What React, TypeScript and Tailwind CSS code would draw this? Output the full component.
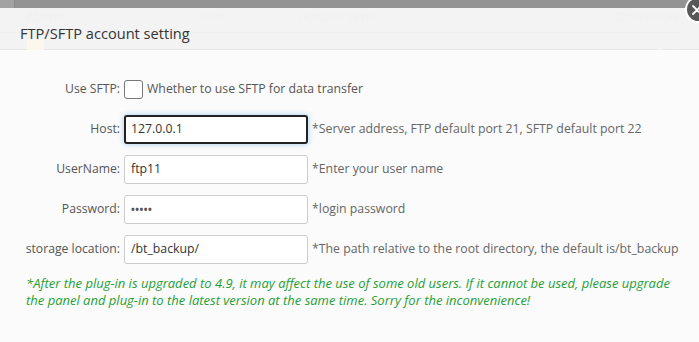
import React from "react";

const font = { fontFamily: '"Open Sans", "Noto Sans", Arial, sans-serif' };

function Row({ label, children, hint }: { label: string; children: React.ReactNode; hint?: string }) {
  return (
    <div className="flex items-center h-[29px]">
      <div className="w-[120px] text-right text-[12.2px] text-[#555] shrink-0 whitespace-nowrap">{label}</div>
      <div className="ml-[4px] flex items-center">{children}</div>
      {hint && <div className="ml-[4px] text-[12.3px] text-[#666] whitespace-nowrap">{hint}</div>}
    </div>
  );
}

function Field({ value, focus, password }: { value: string; focus?: boolean; password?: boolean }) {
  return (
    <div
      className={
        "w-[184px] h-[29px] rounded-[3px] bg-white flex items-center text-[12.3px] text-[#333] " +
        (focus
          ? "border-2 border-[#222] shadow-[0_0_5px_1px_rgba(102,175,233,0.45)] px-[5px]"
          : "border border-[#ccc] px-[6px]")
      }
    >
      {password ? <span className="text-[10px] font-bold text-[#555] tracking-[0.5px]">•••••</span> : value}
    </div>
  );
}

export default function App() {
  return (
    <div className="relative w-[699px] h-[342px] overflow-hidden bg-[#939393]" style={font}>
      <div className="flex h-[8px]">
        <div className="w-[15px] h-full bg-[#a2a2a2] border-r border-[#8a8a8a]" />
        <div className="flex-1 h-full bg-[#939393]" />
      </div>

      <div className="absolute left-0 top-[8px] w-[699px] h-[334px] flex flex-col">
        {/* faint ghost of the table beneath the dialog */}
        <div className="absolute inset-0 pointer-events-none z-10 text-[13.5px] leading-[13px]">
          <div className="absolute left-[27px] top-[2px] text-[#f1f1f1]">Name</div>
          <div className="absolute left-[199px] top-[2px] text-[#f1f1f1]">Size</div>
          <div className="absolute left-[298px] top-[2px] text-[#f1f1f1]">Update time</div>
          <div className="absolute left-[614px] top-[2px] text-[#f1f1f1]">Operation</div>
          <div className="absolute left-0 top-[24px] w-[683px] h-px bg-[#f0f0f0]" />
          <div className="absolute left-[27px] top-[32px] w-[17px] h-[24px] bg-[#fbf7ec]" />
          <div className="absolute left-[52px] top-[39px] text-[#f3f3f3] text-[13px]">aa</div>
          <div className="absolute left-[150px] top-[39px] text-[#f3f3f3] text-[13px]">-</div>
          <div className="absolute left-[225px] top-[39px] text-[#f3f3f3] text-[13px]">-</div>
          <div className="absolute left-[656px] top-[39px] text-[#f3f3f3] text-[13px]">Del</div>
        </div>

        <div className="h-[42px] shrink-0 bg-[#f3f3f3] border-b border-[#e6e6e6] flex items-end pb-[7px] pl-[20px] text-[14.6px] leading-[18px] text-[#333]">
          <span className="relative z-20">FTP/SFTP account setting</span>
        </div>

        <div className="relative z-20 flex-1 bg-[#fbfbfb] pt-[25px] flex flex-col gap-[11px]">
          <Row label="Use SFTP:">
            <div className="flex items-center">
              <div className="w-[19px] h-[19px] rounded-[3px] border border-[#777] bg-white" />
              <span className="ml-[4px] text-[12.3px] text-[#555] whitespace-nowrap">Whether to use SFTP for data transfer</span>
            </div>
          </Row>
          <Row label="Host:" hint="*Server address, FTP default port 21, SFTP default port 22">
            <Field value="127.0.0.1" focus />
          </Row>
          <Row label="UserName:" hint="*Enter your user name">
            <Field value="ftp11" />
          </Row>
          <Row label="Password:" hint="*login password">
            <Field value="" password />
          </Row>
          <Row label="storage location:" hint="*The path relative to the root directory, the default is/bt_backup">
            <Field value="/bt_backup/" />
          </Row>
          <p className="pl-[26px] text-[13px] leading-[17px] italic text-[#1f9f35] whitespace-nowrap">
            *After the plug-in is upgraded to 4.9, it may affect the use of some old users. If it cannot be used, please upgrade
            <br />
            the panel and plug-in to the latest version at the same time. Sorry for the inconvenience!
          </p>
        </div>
      </div>

      <div className="absolute left-[685px] top-[-4px] w-[27px] h-[27px] rounded-full bg-[#585858] border-2 border-white flex items-center justify-start pl-[5px] z-30">
        <svg width="10" height="10" viewBox="0 0 10 10">
          <path d="M1 1 L9 9 M9 1 L1 9" stroke="white" strokeWidth="1.8" strokeLinecap="round" />
        </svg>
      </div>
    </div>
  );
}
